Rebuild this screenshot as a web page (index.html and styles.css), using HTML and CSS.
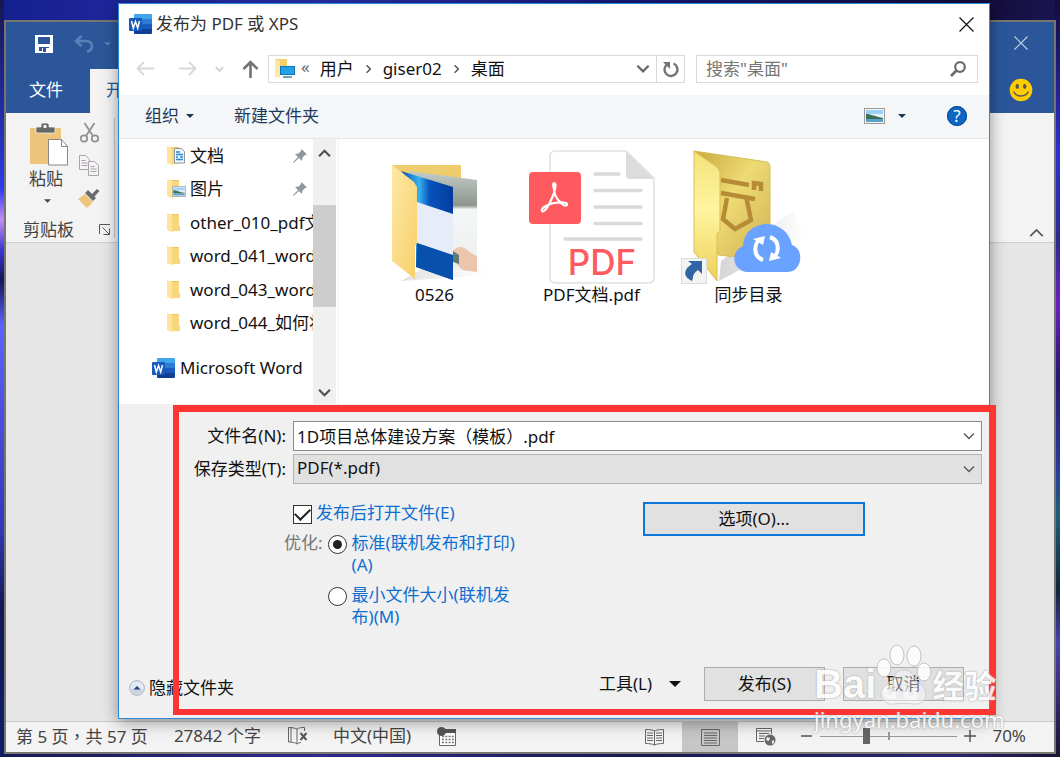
FILE: index.html
```html
<!DOCTYPE html>
<html lang="zh-CN">
<head>
<meta charset="utf-8">
<title>发布为 PDF 或 XPS</title>
<link rel="stylesheet" href="styles.css">
</head>
<body>
<svg class="defs" aria-hidden="true">
  <defs>
    <linearGradient id="gFront" x1="0" y1="0" x2="1" y2="1"><stop offset="0" stop-color="#ffe9a6"/><stop offset="1" stop-color="#f6cf69"/></linearGradient>
    <linearGradient id="gLong" x1="0" y1="0" x2="0" y2="1"><stop offset="0" stop-color="#f3e27b"/><stop offset=".45" stop-color="#fff5a0"/><stop offset="1" stop-color="#eed05a"/></linearGradient>
    <linearGradient id="gBack" x1="0" y1="0" x2="1" y2="1"><stop offset="0" stop-color="#c9a83e"/><stop offset=".45" stop-color="#eedb74"/><stop offset="1" stop-color="#cfb052"/></linearGradient>
    <linearGradient id="gBlue" x1="0" y1="0" x2="1" y2="0"><stop offset="0" stop-color="#0b4fae"/><stop offset=".35" stop-color="#35b2f0"/><stop offset=".55" stop-color="#0a52bd"/><stop offset="1" stop-color="#033c9c"/></linearGradient>
    <linearGradient id="gPhoto" x1="0" y1="0" x2="0" y2="1"><stop offset="0" stop-color="#c3ccc6"/><stop offset=".34" stop-color="#8d958e"/><stop offset=".38" stop-color="#f4f7f7"/><stop offset="1" stop-color="#eceeed"/></linearGradient>
    <linearGradient id="gShade" x1="0" y1="0" x2="1" y2="0"><stop offset="0" stop-color="#aaa"/><stop offset="1" stop-color="#fff"/></linearGradient>
    <symbol id="word" viewBox="0 0 23 20">
      <path d="M6 0h16a1 1 0 0 1 1 1v5H5V1a1 1 0 0 1 1-1z" fill="#41a5ee"/>
      <path d="M5 5h18v5H5z" fill="#2b7cd3"/><path d="M5 10h18v5H5z" fill="#185abd"/>
      <path d="M5 15h18v4a1 1 0 0 1-1 1H6a1 1 0 0 1-1-1z" fill="#103f91"/>
      <rect y="4" width="13" height="13" rx="1" fill="#185abd"/>
      <path d="M2.500 7l1.800 7 2.200-6.500L8.700 14l1.800-7" fill="none" stroke="#fff" stroke-width="1.500"/>
    </symbol>
    <symbol id="folder" viewBox="0 0 18 20">
      <path d="M4 1h8v12h1v5H4z" fill="#f0c75e"/><path d="M0 0l6 2v17.500L0 17z" fill="#ffe49a"/><path d="M5 2h7v11h1v5H5z" fill="#f8d77c"/>
    </symbol>
    <symbol id="pin" viewBox="0 0 14 14">
      <path d="M8.500 0L14 5.500l-2 .5-2.500 2.500-.5 3.500L6 9 1 13.500 0 14l.5-1.500L5 8 2 5l3.500-.5L8 2z" fill="#8e979f"/>
    </symbol>
    <symbol id="chev" viewBox="0 0 12 8"><path d="M1 1.500l5 5 5-5" fill="none" stroke="currentColor" stroke-width="2"/></symbol>
    <symbol id="thin" viewBox="0 0 12 8"><path d="M1 1.500l5 5 5-5" fill="none" stroke="currentColor" stroke-width="1.300"/></symbol>
    <symbol id="caret" viewBox="0 0 8 4"><path d="M0 0h8L4 4z" fill="currentColor"/></symbol>
    <symbol id="cross" viewBox="0 0 14 14"><path d="M.5.5l13 13M13.500.5l-13 13" fill="none" stroke="currentColor" stroke-width="1.100"/></symbol>
    <symbol id="picture" viewBox="0 0 21 16">
      <rect x=".5" y=".5" width="20" height="15" fill="#f4f4f4" stroke="#9b9b9b"/>
      <path d="M2 2h17v6H2z" fill="#9fd0f5"/><path d="M2 6h17v4H2z" fill="#e4f1f8"/><path d="M2 6c4 0 7 2 17 4v1H2z" fill="#3c6f56"/><path d="M2 11h17v3H2z" fill="#5ba2c9"/>
    </symbol>
  </defs>
</svg>

<section class="word-window" aria-label="Word">
  <header class="word-head">
    <div class="quick">
      <button aria-label="保存"><svg width="18" height="18" viewBox="0 0 18 18"><path d="M0 0h18v18H0z" fill="#fff"/><path d="M3 2h12v7H3zM4 12h10v4H4z" fill="#2b579a"/><path d="M7 13h7v5H7z" fill="#fff"/><path d="M8 13h3v4H8z" fill="#2b579a"/></svg></button>
      <button aria-label="撤消" class="undo"><svg width="20" height="18" viewBox="0 0 20 18"><path d="M7.500 1L2 6l5.500 5M2.500 6H12c3.500 0 6 2 6 5s-2 5-5 5.500" fill="none" stroke="#5b80b8" stroke-width="2.600"/></svg></button>
      <svg class="undo-caret" width="7" height="4"><use href="#caret"/></svg>
    </div>
    <nav class="tabs"><a class="tab file" href="#file">文件</a><a class="tab home" href="#home">开始</a></nav>
    <div class="head-right">
      <button aria-label="关闭 Word"><svg width="14" height="14"><use href="#cross"/></svg></button>
      <svg class="smile" width="24" height="24" viewBox="0 0 24 24"><circle cx="12" cy="12" r="11.300" fill="#fc0"/><ellipse cx="8.300" cy="8.500" rx="1.700" ry="2.400" fill="#555"/><ellipse cx="15.700" cy="8.500" rx="1.700" ry="2.400" fill="#555"/><path d="M4.500 13.500c3 6 12 6 15 0" fill="none" stroke="#555" stroke-width="1.400"/></svg>
    </div>
  </header>
  <div class="ribbon">
    <div class="clipboard">
      <div class="clip-tools">
        <button class="paste">
          <svg width="38" height="43" viewBox="0 0 38 43"><rect y="5" width="31" height="36" rx="1" fill="#ecc47a"/><path d="M6 4h5V1.500L12.500 0h5L19 1.500V4h6v6H6z" fill="#666" stroke="#f2f2f2" stroke-width=".8"/><path d="M13.500 2h3v3h-3z" fill="#f2f2f2"/><path d="M18.500 16.500h13l6 7V42h-19z" fill="#fff" stroke="#888" /><path d="M31.500 16.500v7h6" fill="none" stroke="#888"/></svg>
          <span>粘贴</span>
          <svg width="7" height="4"><use href="#caret"/></svg>
        </button>
        <div class="clip-side">
          <button aria-label="剪切"><svg width="19" height="20" viewBox="0 0 19 20"><g fill="none" stroke="#929292" stroke-width="1.800"><circle cx="4" cy="15.500" r="3.200"/><circle cx="15" cy="15.500" r="3.200"/><path d="M4.500 0l8.500 13M14.500 0L6 13"/></g></svg></button>
          <button aria-label="复制"><svg width="20" height="21" viewBox="0 0 20 21"><g fill="#f6f3f6" stroke="#a9a4a9"><path d="M.5.500h6l4 4v10H.500z"/><path d="M9.500 6.500h6l4 4v10h-10z"/><path d="M2.500 5.500h4M2.500 8h6M2.500 10.500h6M11.500 11.500h4M11.500 14h6M11.500 16.500h6"/></g></svg></button>
          <button aria-label="格式刷"><svg width="22" height="20" viewBox="0 0 22 20"><path d="M0 11l7-5 8 8-6 6z" fill="#ecc47a"/><path d="M7 5l3-3 4 4 5-5 2.500 2-5 5.500 1.500 1.500-3 3z" fill="#6b6b6b"/></svg></button>
        </div>
      </div>
      <div class="group-name"><span>剪贴板</span><button aria-label="剪贴板选项"><svg width="12" height="12" viewBox="0 0 12 12"><path d="M.5 10V.5H11M3.500 3.500L10 10M10.500 4.500v6h-6" fill="none" stroke="#555"/></svg></button></div>
    </div>
    <button class="collapse" aria-label="折叠功能区"><svg class="up" width="15" height="10"><use href="#thin"/></svg></button>
  </div>
  <div class="canvas"></div>
  <footer class="status">
    <span class="pages">第 5 页<span class="mid" lang="zh-TW">，</span>共 57 页</span>
    <span class="words">27842 个字</span>
    <svg class="proof" width="20" height="18" viewBox="0 0 20 18"><path d="M9 17V2C7 1 4 .5.500.500v14.500C4 15 7 15.500 9 17c1-.8 2-1.200 4-1.500M9 2c1.500-1 3-1.500 7.500-1.500V4M3 0v15" fill="none" stroke="#666"/><path d="M12.500 6l6 7M18.500 6l-6 7" stroke="#555" stroke-width="2"/></svg>
    <span class="lang">中文(中国)</span>
    <svg width="19" height="19" viewBox="0 0 19 19"><path d="M2.500 8v10.500h16V3H9" fill="#fff" stroke="#666"/><path d="M8 2h11v4H8z" fill="#555"/><path d="M5 9.500h12M5 12.500h12M5 15.500h12" stroke="#777" stroke-width="1.500" stroke-dasharray="2 1.300"/><circle cx="4.500" cy="4.500" r="4.500" fill="#555"/></svg>
    <div class="views">
      <button aria-label="阅读视图"><svg width="19" height="17" viewBox="0 0 19 17"><path d="M9.500 16V2C8 1 5 .5.500.500v14c4 0 7 .5 9 1.500 2-1 5-1.500 9-1.500V.5C14 .5 11 1 9.500 2M2 4h6M2 6.500h6M2 9h6M2 11.500h6M11 4h6M11 6.500h6M11 9h6M11 11.500h6" fill="none" stroke="#666"/></svg></button>
      <button class="active" aria-label="页面视图"><svg width="19" height="17" viewBox="0 0 19 17"><path d="M.5.500h18v16H.500zM3 4h13M3 6.500h13M3 9h13M3 11.500h13M3 14h13" fill="none" stroke="#666"/></svg></button>
      <button aria-label="Web 版式"><svg width="20" height="18" viewBox="0 0 20 18"><path d="M8 13.500H.5V.5h15V6M.5 3h15M3 5.500h10M3 8h6M3 10.500h5" fill="none" stroke="#666"/><circle cx="14" cy="12" r="5.500" fill="#666"/><path d="M11 9l3 1-1 3-3-1M16 13l2-1v3l-2 1z" fill="#eee"/></svg></button>
    </div>
    <div class="zoom">
      <button aria-label="缩小"><svg width="12" height="12"><path d="M0 6h11" stroke="#555" stroke-width="1.500"/></svg></button>
      <input type="range" min="0" max="100" value="33" aria-label="缩放">
      <button aria-label="放大"><svg width="12" height="12"><path d="M0 6h12M6 0v12" stroke="#555" stroke-width="1.500"/></svg></button>
      <span>70%</span>
    </div>
  </footer>
</section>

<section class="dialog" role="dialog" aria-label="发布为 PDF 或 XPS">
  <header class="title"><svg width="23" height="20"><use href="#word"/></svg><h1>发布为 PDF 或 XPS</h1><button aria-label="关闭"><svg width="15" height="15"><use href="#cross"/></svg></button></header>

  <div class="nav">
    <div class="arrows">
      <button aria-label="后退"><svg width="19" height="15" viewBox="0 0 19 15"><path d="M18 7.500H1.500M8 1L1.500 7.500 8 14" fill="none" stroke="#d8d8d8" stroke-width="1.800"/></svg></button>
      <button aria-label="前进"><svg width="19" height="15" viewBox="0 0 19 15"><path d="M1 7.500h16.500M11 1l6.500 6.500L11 14" fill="none" stroke="#d8d8d8" stroke-width="1.800"/></svg></button>
      <button aria-label="最近位置" class="recent"><svg width="9" height="6"><use href="#chev"/></svg></button>
      <button aria-label="向上"><svg width="17" height="18" viewBox="0 0 17 18"><path d="M8.500 18V2M1.500 9l7-7 7 7" fill="none" stroke="#737373" stroke-width="2.600"/></svg></button>
    </div>
    <div class="address">
      <svg width="20" height="19" viewBox="0 0 20 19"><path d="M0 0h12v16H4L0 18z" fill="#f6cf6c"/><path d="M0 0l5 2v17l-5-2z" fill="#ffe8a4"/><rect x="5.500" y="7.500" width="14" height="8" fill="#22a0ea" stroke="#0f74b8"/><path d="M8 18h9" stroke="#3388bb" stroke-width="1.500"/></svg>
      <span class="more">«</span>
      <a href="#users">用户</a><svg class="right" width="9" height="6"><use href="#chev"/></svg>
      <a href="#giser02">giser02</a><svg class="right" width="9" height="6"><use href="#chev"/></svg>
      <a href="#desktop">桌面</a>
      <button class="drop" aria-label="以前的位置"><svg width="14" height="9"><use href="#chev"/></svg></button>
      <button class="refresh" aria-label="刷新"><svg width="16" height="16" viewBox="0 0 16 16"><path d="M10.500 2.500a6.500 6.500 0 1 1-6 .5" fill="none" stroke="#737373" stroke-width="2.400"/><path d="M0 1h7v7z" fill="#737373"/></svg></button>
    </div>
    <label class="search"><input type="text" placeholder="搜索&quot;桌面&quot;" aria-label="搜索桌面"><svg width="16" height="16" viewBox="0 0 16 16"><circle cx="10" cy="6" r="4.800" fill="none" stroke="#6b6b6b" stroke-width="2.200"/><path d="M6.500 9.500L1 15" stroke="#6b6b6b" stroke-width="2.600"/></svg></label>
  </div>

  <div class="toolbar">
    <button>组织<svg width="8" height="4"><use href="#caret"/></svg></button>
    <button>新建文件夹</button>
    <button class="view" aria-label="更改视图"><svg width="21" height="16"><use href="#picture"/></svg><svg width="8" height="4"><use href="#caret"/></svg></button>
    <button class="help" aria-label="帮助">?</button>
  </div>

  <div class="browser">
    <nav class="tree">
      <ul>
        <li><a href="#docs"><svg width="18" height="20" viewBox="0 0 18 20"><use href="#folder" width="18" height="20"/><path d="M7.500 2.500h7l3 3V17h-10z" fill="#eef5fb" stroke="#8e9aa5"/><path d="M9 6h4M9 8.500h7M9 11h2m2 0h3M9 13.500h7" stroke="#2a86cf" stroke-width="1.500"/></svg><span>文档</span></a><svg class="pin" width="14" height="14"><use href="#pin"/></svg></li>
        <li><a href="#pics"><svg width="18" height="20" viewBox="0 0 18 20"><use href="#folder" width="18" height="20"/><use href="#picture" x="5" y="7" width="14" height="11"/></svg><span>图片</span></a><svg class="pin" width="14" height="14"><use href="#pin"/></svg></li>
        <li><a href="#other"><svg width="18" height="20"><use href="#folder"/></svg><span>other_010_pdf文</span></a></li>
        <li><a href="#w41"><svg width="18" height="20"><use href="#folder"/></svg><span>word_041_word</span></a></li>
        <li><a href="#w43"><svg width="18" height="20"><use href="#folder"/></svg><span>word_043_word</span></a></li>
        <li><a href="#w44"><svg width="18" height="20"><use href="#folder"/></svg><span>word_044_如何将</span></a></li>
      </ul>
      <a class="root" href="#word-root"><svg width="23" height="20"><use href="#word"/></svg><span>Microsoft Word</span></a>
    </nav>
    <div class="scroll"><svg class="up" width="13" height="9"><use href="#chev"/></svg><div class="track"><div class="thumb"></div></div><svg width="13" height="9"><use href="#chev"/></svg></div>
    <div class="files">
      <figure>
        <svg width="132" height="140" viewBox="6 0 132 140"><path d="M38 137l86-6-24-30z" fill="url(#gShade)" opacity=".35"/><path d="M29 21h69v98H60z" fill="#f0cd6c"/><path d="M46 27l68 9v92l-38-5z" fill="url(#gPhoto)"/><path d="M90 107c10-10 14 2 24 5v16l-14-2c-8-6-10-12-10-19z" fill="#ecc6ab"/><path d="M90 107l6 4v9l-6-2z" fill="#5d7973"/><path d="M38 27l52 16v93l-37-13V44z" fill="url(#gBlue)"/><path d="M54 58l36 12v42l-36-13z" fill="#e6ecf8"/><path d="M54 99l36 12v25l-37-13z" fill="#0751ad"/><path d="M29 21l22 17 3 5v56l-2 4v32l-23-18z" fill="url(#gFront)"/></svg>
        <figcaption>0526</figcaption>
      </figure>
      <figure>
        <svg width="132" height="140" viewBox="0 0 132 140"><path d="M100 7l28 27v100a5 5 0 0 1-5 5H29a5 5 0 0 1-5-5V12a5 5 0 0 1 5-5z" fill="#fff" stroke="#dfe1e1" stroke-width="1.500"/><path d="M100 7l28 28h-24a4 4 0 0 1-4-4z" fill="#dbdddd"/><path d="M69 30h24M69 46.500h46M69 63h46M69 79.500h46M39 95h76" stroke="#d9dbdb" stroke-width="3.500" stroke-linecap="round"/><rect x="3" y="28" width="52" height="52" rx="4" fill="#fe5a5f"/><path d="M28 45c-2-6 0-6 0-6 3 0 1 8-2 15-3 8-8 15-10 13-2-3 7-7 12-8 7-1 14-1 13 2-2 3-9-4-12-10z" fill="none" stroke="#fff" stroke-width="2.200"/><text class="pdf-word" x="76" y="131" text-anchor="middle">PDF</text></svg>
        <figcaption>PDF文档.pdf</figcaption>
      </figure>
      <figure>
        <svg width="132" height="140" viewBox="6 0 132 140"><path d="M42 137l86-46-12-24-72 50z" fill="url(#gShade)" opacity=".5"/><path d="M17 7l73 11q3 1 3 5v94l-52-6z" fill="url(#gBack)" stroke="#d5bd5a"/><g fill="none" stroke="#b68c37" stroke-width="4.500"><path d="M44 36l28 5M44 49l34 6M77 46v-7l7 1v7M50 54l-4 21 12 10 16-9-5-24"/></g><path d="M17 7l23 16 3 5v59l-3 3v47L17 108z" fill="url(#gLong)" stroke="#ddbd4e"/><path d="M69 128a13.500 13.500 0 0 1-3-26c1-28 43-30 49-1 13 4 10 27-4 27z" fill="#6aa2ff"/><path d="M86 116c-11-4-9-18-2-21M93 93c11 4 9 18 2 21" fill="none" stroke="#fff" stroke-width="4"/><path d="M76 95l12-3-2 9zM104 114l-12 3 2-9z" fill="#fff"/><rect x="4.500" y="114.500" width="25" height="25" fill="#f3f3f3" stroke="#ddd"/><path d="M11 117h14v13l-4-4c-7 5-4 8-6 11-10-5-8-12 0-17z" fill="#2f65a5"/></svg>
        <figcaption>同步目录</figcaption>
      </figure>
    </div>
  </div>

  <form class="save">
    <div class="fields">
      <label for="fname">文件名(N):</label>
      <div class="combo"><input id="fname" type="text" value="1D项目总体建设方案（模板）.pdf"><svg width="12" height="8"><use href="#thin"/></svg></div>
      <label for="ftype">保存类型(T):</label>
      <div class="combo type"><select id="ftype"><option>PDF(*.pdf)</option></select><svg width="12" height="8"><use href="#thin"/></svg></div>
    </div>
    <div class="options">
      <div class="choices">
        <label class="open"><input type="checkbox" checked><span>发布后打开文件(E)</span></label>
        <div class="optimise" role="radiogroup" aria-labelledby="opt">
          <span id="opt">优化:</span>
          <div class="radios">
            <label><input type="radio" name="opt" checked><span>标准(联机发布和打印)(A)</span></label>
            <label><input type="radio" name="opt"><span>最小文件大小(联机发布)(M)</span></label>
          </div>
        </div>
      </div>
      <button type="button" class="more-options">选项(O)...</button>
    </div>
    <footer class="actions">
      <button type="button" class="hide"><svg width="16" height="16" viewBox="0 0 16 16"><circle cx="8" cy="8" r="7.400" fill="#e5eaf2" stroke="#a9b4c6"/><path d="M2 9h12a6 6 0 0 1-12 0z" fill="#ccd4e0"/><path d="M4.500 9.500L8 6l3.500 3.500z" fill="#1f3f8f"/></svg>隐藏文件夹</button>
      <button type="button" class="tools">工具(L)<svg width="12" height="6"><use href="#caret"/></svg></button>
      <button type="button" class="push">发布(S)</button>
      <button type="button" class="push">取消</button>
    </footer>
  </form>
</section>

<div class="frame"></div>
<div class="mark">
  <div class="mark-top"><span class="latin">Bai</span><svg width="56" height="62" viewBox="0 0 56 62"><g fill="#fff" stroke="#bbb"><ellipse cx="8" cy="24" rx="7" ry="9"/><ellipse cx="21" cy="11" rx="7" ry="10"/><ellipse cx="38" cy="12" rx="7" ry="10"/><ellipse cx="48" cy="28" rx="7" ry="9"/></g><path d="M28 26c9 0 9 8 16 14 11 9 5 21-6 20-7-1-13-1-20 0C6 61 0 49 10 41c8-6 8-15 18-15z" fill="#fff" fill-opacity=".5" stroke="#ccc"/><path d="M18 36v17h-4a5 5 0 0 1 0-10h4M30 43v7q0 4 4 4h5V43" fill="none" stroke="#fff" stroke-width="4" opacity=".7"/></svg><span class="cjk">经验</span></div>
  <div class="mark-url">jingyan.baidu.com</div>
</div>
</body>
</html>
```
FILE: styles.css
```css
* { box-sizing: border-box; }

body {
  margin: 0;
  min-height: 100vh;
  position: relative;
  display: flex;
  padding: 20px 4px 3px;
  overflow: hidden;
  font: 17px/22px "Noto Sans", "Noto Sans CJK SC", sans-serif;
  color: #111;
  background:
    linear-gradient(#17174f, #2634c4 20%, #2d3cf0 25%, #c58cf0 29%, #3b35d8 33%, #14165a 37%, #5a63ff 43%, #3336b8 70%, #121a55 80%, #0e1c6a) left / 4px 100% no-repeat,
    linear-gradient(#120c3c, #2f2fd0 20%, #2a2a90 32%, #6c1fc0 40%, #261670 50%, #2a3aa0 62%, #1e5f78 68%, #12243a 78%, #4a3fb0 85%, #15152e) right / 5px 100% no-repeat,
    linear-gradient(90deg, #15208f, #2b2fae 30%, #161878 60%, #130c3a 92%, #1a1550) top / 100% 22px no-repeat,
    linear-gradient(90deg, #141a50, #2b2a8c 30%, #181850 60%, #2a2372 90%, #151530);
}

.defs { position: absolute; width: 0; height: 0; }
svg { display: block; flex: none; overflow: visible; }
button {
  margin: 0;
  padding: 0;
  border: 0;
  background: none;
  font: inherit;
  color: inherit;
  display: flex;
  align-items: center;
  justify-content: center;
}
a { color: inherit; text-decoration: none; }
.up { transform: rotate(180deg); }
.right { transform: rotate(-90deg); }

/* Word window */
.word-window {
  flex: 1;
  display: flex;
  flex-direction: column;
  border: 2px solid #77756f;
  background: #e6e6e6;
}
.word-head {
  display: grid;
  grid-template: 47px 44px / 1fr auto;
  background: #2b579a;
}
.quick { display: flex; align-items: center; padding: 0 0 3px 29px; }
.undo { margin-left: 21px; }
.undo-caret { margin-left: 10px; color: #5b80b8; }
.tabs { grid-row: 2; display: flex; }
.tab { display: flex; align-items: center; padding-bottom: 2px; color: #fff; }
.file { width: 84px; justify-content: center; padding-right: 4px; }
.home { width: 80px; padding-left: 16px; background: #f3f3f3; color: #2b579a; }
.head-right {
  grid-area: 1 / 2 / 3 / 3;
  width: 66px;
  display: flex;
  flex-direction: column;
  align-items: center;
  gap: 28px;
  padding-top: 14px;
  color: #c5d1e4;
}
.ribbon {
  display: flex;
  justify-content: space-between;
  align-items: flex-end;
  height: 130px;
  border-bottom: 1px solid #cfcfcf;
  background: #f3f3f3;
}
.clipboard {
  width: 109px;
  height: 120px;
  margin-bottom: 4px;
  border-right: 1px solid #c6c6c6;
  color: #444;
}
.clip-tools { display: flex; gap: 10px; padding: 5px 0 0 24px; }
.paste { flex-direction: column; width: 38px; justify-content: flex-start; }
.paste span { margin: 2px 6px 9px 0; white-space: nowrap; }
.paste > svg:last-child { margin-right: 4px; }
.clip-side { display: flex; flex-direction: column; gap: 12px; }
.group-name { display: flex; align-items: center; gap: 25px; padding: 11px 0 0 17px; }
.collapse { width: 36px; height: 18px; color: #555; }
.canvas { flex: 1; }
.status {
  display: flex;
  align-items: center;
  height: 31px;
  padding: 0 0 2px 10px;
  background: #f3f3f3;
  color: #444;
  border-top: 1px solid #c8c8c8;
  white-space: nowrap;
}
.mid { font-family: "Noto Sans CJK TC", sans-serif; }
.words { margin-left: 26px; }
.proof { margin-left: 27px; }
.lang { margin: 0 26px 0 25px; }
.views { display: flex; margin: 0 0 -2px auto; align-self: stretch; }
.views button { width: 56px; }
.views .active { background: #c6c6c6; }
.zoom { display: flex; align-items: center; padding: 0 28px 0 7px; gap: 7px; }
.zoom span { margin-left: 9px; }
.zoom input {
  appearance: none;
  width: 137px;
  height: 16px;
  margin: 0;
  background:
    linear-gradient(#999, #999) center / 2px 8px no-repeat,
    linear-gradient(#999, #999) center / 100% 1px no-repeat;
}
.zoom input::-webkit-slider-thumb {
  appearance: none;
  width: 7px;
  height: 16px;
  background: #666;
}

/* Dialog */
.dialog {
  position: absolute;
  inset: 3px 70px 38px 118px;
  display: flex;
  flex-direction: column;
  border: 1px solid #2f8ad6;
  background: #fff;
  box-shadow: 0 3px 15px rgba(0, 0, 0, .4);
}
.title { display: flex; align-items: center; height: 40px; padding: 0 15px 0 10px; gap: 4px; }
.title h1 { flex: 1; margin: 0; font: inherit; color: #333; }
.nav { display: flex; align-items: center; height: 51px; padding: 0 11px 2px 17px; }
.arrows { display: flex; align-items: center; width: 132px; gap: 23px; }
.recent { margin: 0 -5px; color: #ccc; }
.address {
  flex: 1;
  display: flex;
  align-items: center;
  height: 28px;
  border: 1px solid #d9d9d9;
  padding-left: 6px;
}
.more { margin: 0 10px 3px 6px; color: #666; }
.address .right { margin: 0 10px; color: #555; }
.drop { margin-left: auto; width: 26px; color: #666; }
.refresh { width: 28px; height: 26px; border-left: 1px solid #d9d9d9; }
.search {
  width: 282px;
  display: flex;
  align-items: center;
  height: 28px;
  margin-left: 11px;
  border: 1px solid #d9d9d9;
  padding: 0 11px 0 9px;
}
.search input {
  flex: 1;
  min-width: 0;
  border: 0;
  padding: 0;
  background: none;
  font: inherit;
}
.search input::placeholder { color: #767676; }
.toolbar {
  display: flex;
  height: 44px;
  padding: 0 22px 2px 26px;
  border-bottom: 1px solid #e4e7ea;
  background: #f4f6f8;
  color: #1e395b;
}
.toolbar button { gap: 7px; margin-right: 40px; }
.toolbar .view { margin: 0 41px 0 auto; gap: 13px; }
.toolbar .help {
  align-self: center;
  width: 20px;
  height: 20px;
  margin: 0;
  border-radius: 50%;
  background: #0b66c4;
  color: #fff;
  outline: 1px solid #0a4a90;
  outline-offset: -1px;
}
.browser { display: flex; height: 265px; }
.tree { width: 194px; overflow: hidden; white-space: nowrap; }
.tree ul {
  display: grid;
  grid-auto-rows: 1fr;
  height: 201px;
  margin: 0;
  padding: 0 0 0 48px;
  list-style: none;
}
.tree li { display: flex; align-items: center; min-width: 0; overflow: hidden; }
.tree li a { display: flex; align-items: center; gap: 5px; }
.pin { margin: 0 6px 0 auto; }
.root { display: flex; align-items: center; gap: 5px; padding: 17px 0 0 33px; }
.scroll {
  width: 23px;
  display: flex;
  flex-direction: column;
  align-items: center;
  padding: 10px 0 7px;
  background: #f0f0f0;
  color: #505050;
}
.track { flex: 1; width: 100%; padding-top: 47px; }
.thumb { height: 102px; background: #cdcdcd; }
.files { display: flex; flex: 1; margin-left: 2px; padding-left: 17px; border-left: 1px solid #f2f2f2; }
figure { display: flex; flex-direction: column; align-items: center; width: 157px; margin: 0; padding-top: 5px; }
.pdf-word { font: 500 35px Inter, sans-serif; fill: #fe5a5f; }

/* Save form */
.save { flex: 1; display: flex; flex-direction: column; background: #f0f0f0; }
.fields {
  display: grid;
  grid-template-columns: 167px 1fr;
  align-items: center;
  gap: 3px 7px;
  padding: 17px 7px 0 0;
}
.fields label { text-align: right; }
.combo { position: relative; }
.combo input, .combo select {
  appearance: none;
  display: block;
  width: 100%;
  height: 30px;
  margin: 0;
  padding: 0 30px 2px 3px;
  border: 1px solid #8a8a8a;
  border-radius: 0;
  background: #fff;
  font: inherit;
  color: #111;
}
.combo select { border-color: #b4b4b4; background: #e1e1e1; }
.combo svg { position: absolute; right: 7px; top: 11px; color: #555; pointer-events: none; }
.options { display: flex; align-items: flex-start; padding: 18px 0 0 165px; }
.choices { width: 359px; color: #0e6fd0; }
.open { display: flex; gap: 4px; padding-left: 9px; }
.optimise { display: flex; gap: 5px; margin-top: 8px; }
#opt { color: #777; }
.radios { display: grid; gap: 8px; }
.radios label { display: flex; gap: 5px; width: 192px; }
.choices input {
  appearance: none;
  flex: none;
  display: grid;
  place-items: center;
  width: 19px;
  height: 19px;
  margin: 3px 0 0;
  border: 1px solid #333;
  background: #fff;
}
.choices input[type="radio"] { border-radius: 50%; }
.choices input[type="radio"]:checked::before {
  content: "";
  width: 9px;
  height: 9px;
  border-radius: 50%;
  background: #222;
}
.choices input[type="checkbox"]:checked::before {
  content: "";
  width: 13px;
  height: 7px;
  margin-bottom: 4px;
  border: solid #222;
  border-width: 0 0 2px 2px;
  transform: rotate(-45deg);
}
.more-options { width: 222px; height: 34px; border: 2px solid #0c78d8; background: #e1e1e1; }
.actions { display: flex; align-items: center; margin-top: auto; padding: 0 25px 17px 10px; }
.hide { align-self: flex-end; height: 26px; gap: 4px; }
.tools { margin-left: auto; gap: 17px; }
.push { width: 121px; height: 34px; border: 1px solid #adadad; background: #e1e1e1; }
.tools + .push { margin: 0 18px 0 23px; }

/* Highlight frame and site mark */
.frame {
  position: absolute;
  inset: 405px 64px 42px 173px;
  border: 6px solid #ff3534;
  border-top-width: 7px;
  pointer-events: none;
}
.mark {
  position: absolute;
  right: 58px;
  bottom: 25px;
  width: 188px;
  color: #fff;
  opacity: .85;
  text-shadow: 0 0 1px #999, 0 0 2px #aaa;
  pointer-events: none;
}
.mark-top { display: flex; align-items: flex-end; }
.latin { font: bold 40px/44px "Liberation Sans", sans-serif; }
.cjk { font: bold 32px/44px "Noto Sans CJK SC", sans-serif; }
.mark-url { font-size: 22px; line-height: 26px; }
```
